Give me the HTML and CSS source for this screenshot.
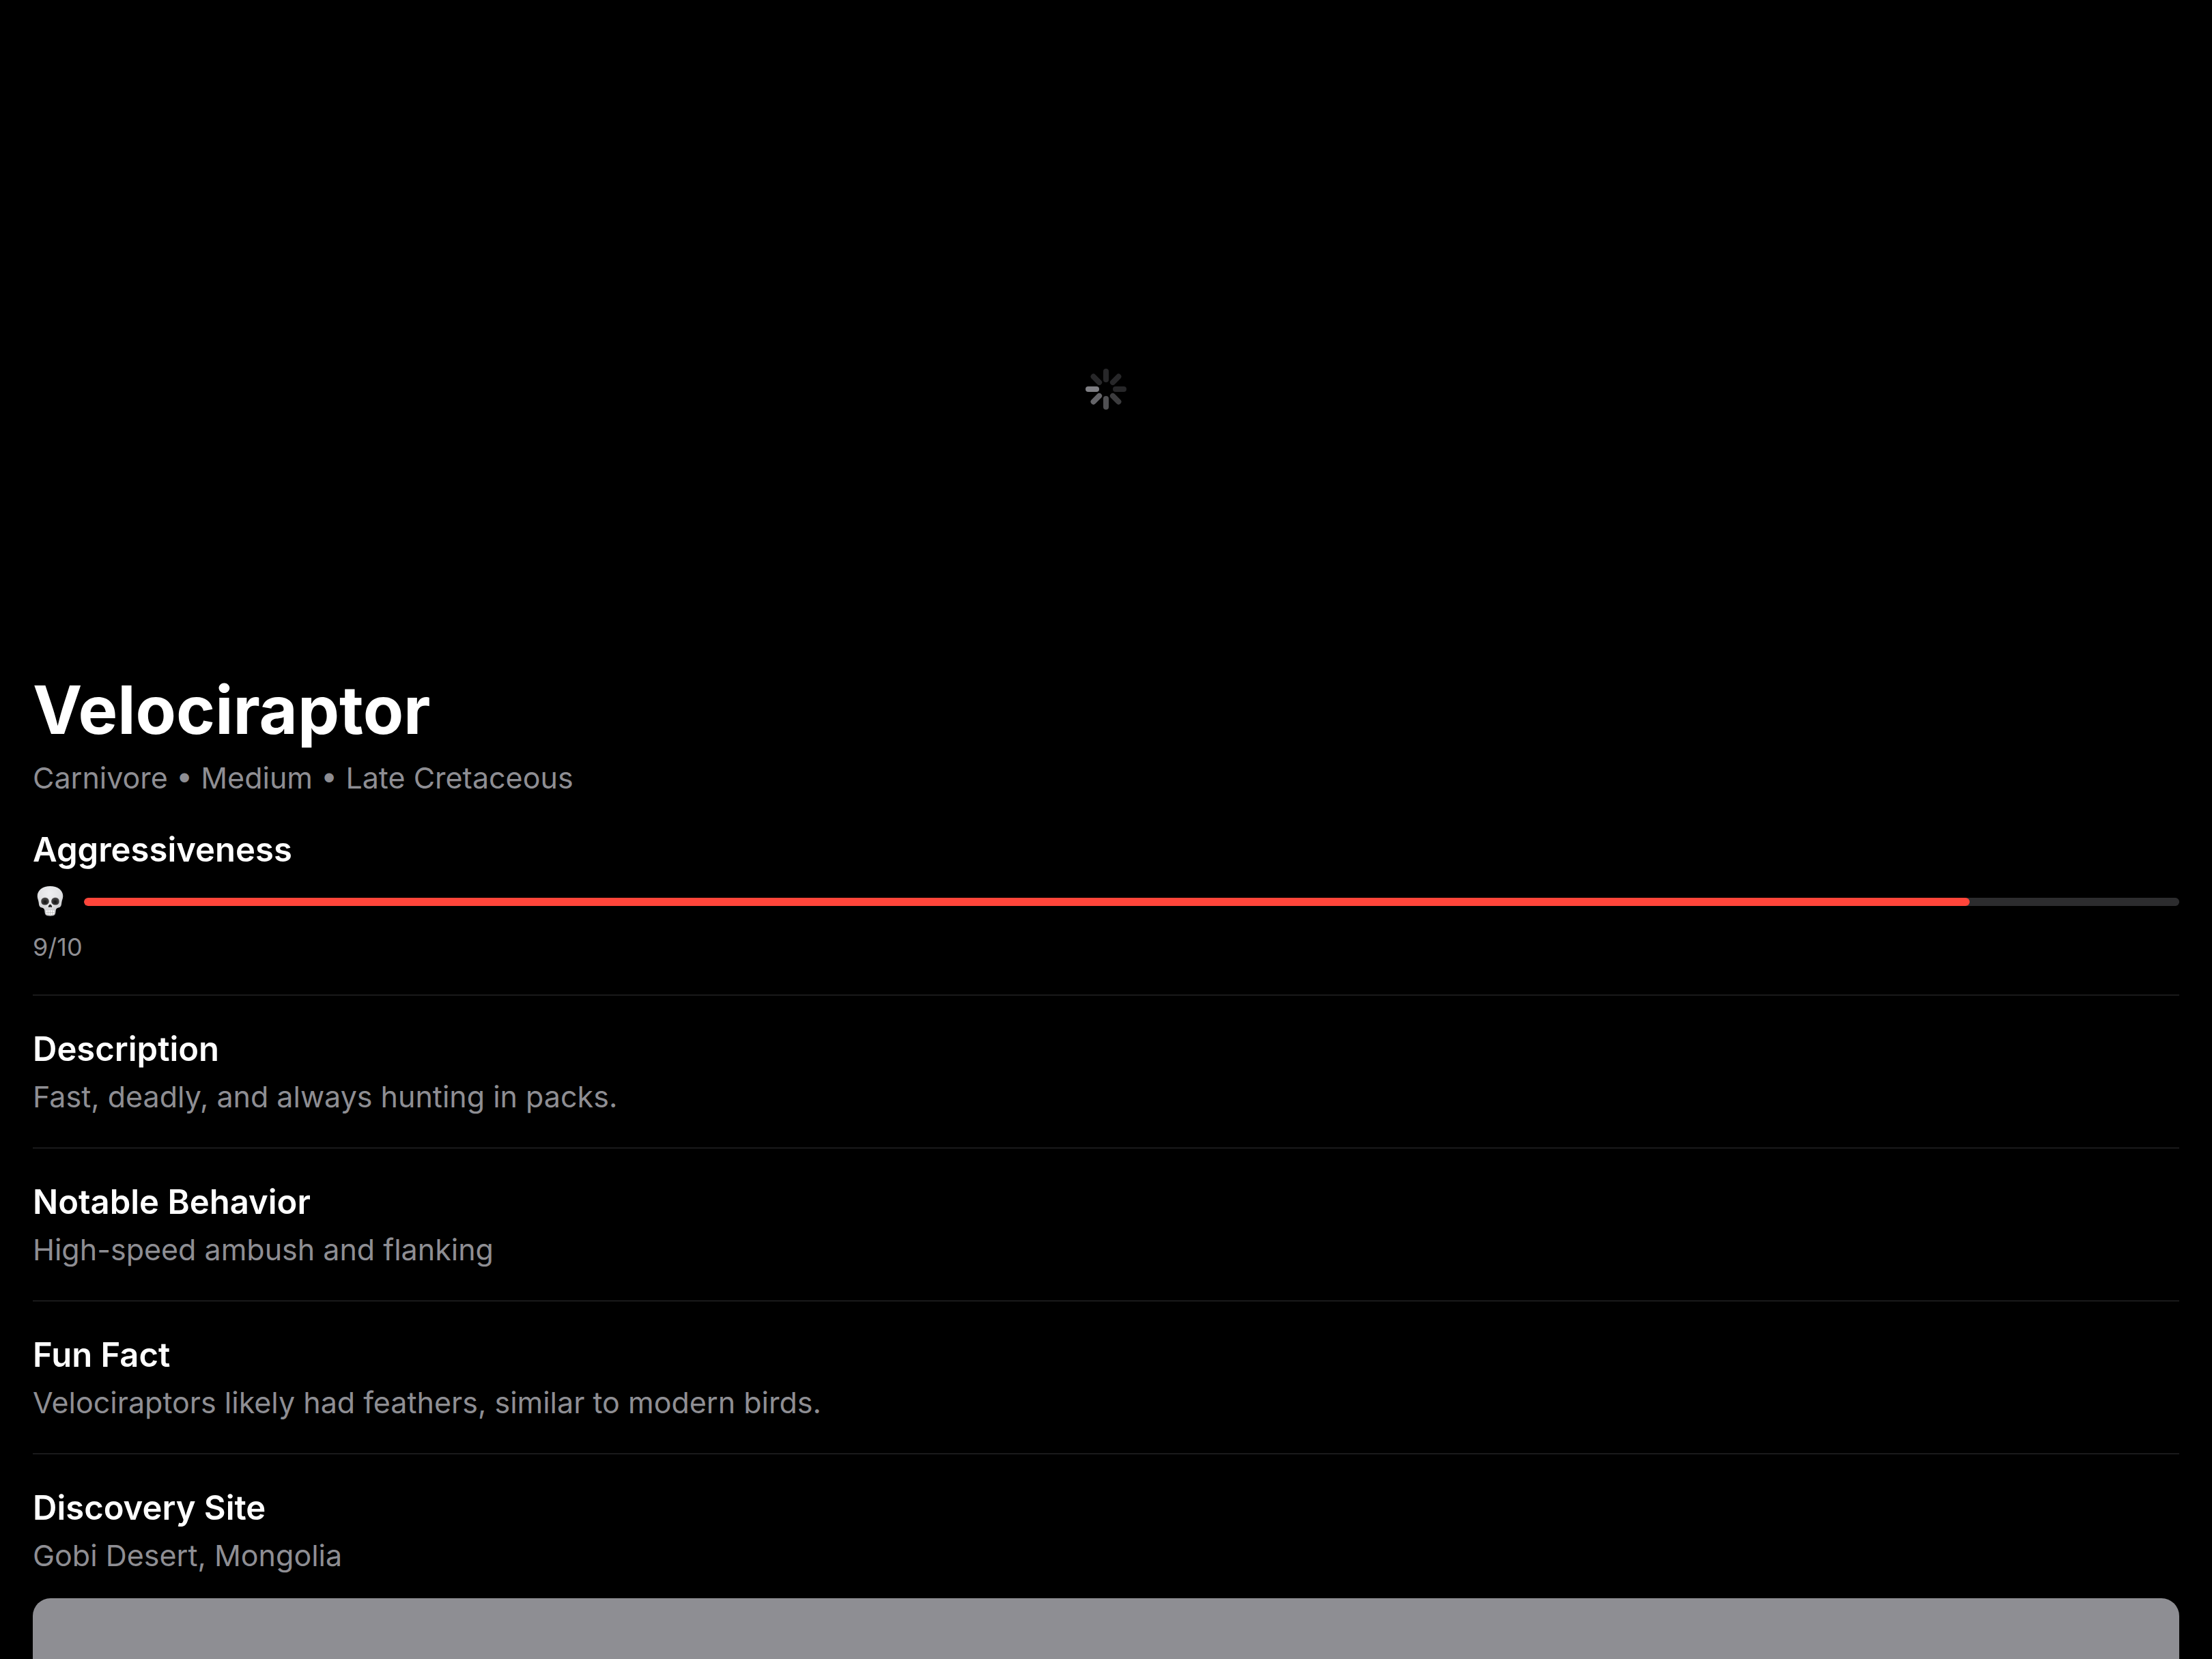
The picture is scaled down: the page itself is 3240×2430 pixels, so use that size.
FILE: index.html
```html
<!DOCTYPE html>
<html lang="en">
<head>
<meta charset="utf-8">
<meta name="viewport" content="width=device-width, initial-scale=1">
<title>Velociraptor</title>
<link rel="stylesheet" href="styles.css">
</head>
<body>
<main class="page">
  <div class="hero" role="status" aria-label="Loading image">
    <svg class="spinner" viewBox="-30 -30 60 60" aria-hidden="true">
      <rect x="-4" y="-30" width="8" height="20" rx="4" fill="#272729"/>
      <rect x="-4" y="-30" width="8" height="20" rx="4" fill="#272729" transform="rotate(45)"/>
      <rect x="-4" y="-30" width="8" height="20" rx="4" fill="#272729" transform="rotate(90)"/>
      <rect x="-4" y="-30" width="8" height="20" rx="4" fill="#3c3c3e" transform="rotate(135)"/>
      <rect x="-4" y="-30" width="8" height="20" rx="4" fill="#505053" transform="rotate(180)"/>
      <rect x="-4" y="-30" width="8" height="20" rx="4" fill="#656569" transform="rotate(225)"/>
      <rect x="-4" y="-30" width="8" height="20" rx="4" fill="#7f7f84" transform="rotate(270)"/>
      <rect x="-4" y="-30" width="8" height="20" rx="4" fill="#272729" transform="rotate(315)"/>
    </svg>
  </div>
  <article class="details">
    <header class="intro">
      <h1 class="title">Velociraptor</h1>
      <p class="body-text">Carnivore • Medium • Late Cretaceous</p>
    </header>
    <section class="meter">
      <h2 class="heading"><label for="aggressiveness">Aggressiveness</label></h2>
      <div class="meter-row">
        <svg class="skull" viewBox="0 0 51 54" aria-hidden="true">
          <defs>
            <radialGradient id="bone" cx="0.48" cy="0.25" r="0.8">
              <stop offset="0" stop-color="#eeeff1"/>
              <stop offset="0.5" stop-color="#e2e3e5"/>
              <stop offset="1" stop-color="#b4b5b8"/>
            </radialGradient>
            <radialGradient id="socket" cx="0.5" cy="0.6" r="0.6">
              <stop offset="0" stop-color="#101010"/>
              <stop offset="1" stop-color="#505050"/>
            </radialGradient>
          </defs>
          <path fill="url(#bone)" d="M25.500 4C14.500 4 6.700 10 6.700 18.500C6.700 22 8.300 24.500 8.700 28C9.100 31.500 9.500 34.500 12.500 35.300C15 36 16.800 36.500 17.200 39C17.500 41 17.400 43.500 18.500 45.600C20 48.500 31 48.500 32.500 45.600C33.600 43.500 33.500 41 33.800 39C34.200 36.500 36 36 38.500 35.300C41.500 34.500 41.900 31.500 42.300 28C42.700 24.500 44.300 22 44.300 18.500C44.300 10 36.500 4 25.500 4Z"/>
          <path fill="url(#socket)" d="M12.300 26.800C12 22.500 14.800 20.800 17.800 20.700C21.300 20.600 23.800 22.800 23.800 26.200C23.800 29.500 21.400 31.400 18 31.500C15 31.600 12.500 30.500 12.300 26.800Z"/>
          <path fill="url(#socket)" d="M38.700 26.800C39 22.500 36.200 20.800 33.200 20.700C29.700 20.600 27.200 22.800 27.200 26.200C27.200 29.500 29.600 31.400 33 31.500C36 31.600 38.500 30.500 38.700 26.800Z"/>
          <path fill="#222" d="M25.500 30.800C23.900 30.800 22.500 33.500 22.900 34.500C23.400 35.500 24.800 34.400 25.500 34.400C26.200 34.400 27.600 35.500 28.100 34.500C28.500 33.500 27.100 30.800 25.500 30.800Z"/>
          <path fill="#fafafa" d="M19.300 39.800C22 39 29 39 31.700 39.800L31.200 45C28 46.500 23 46.500 19.800 45Z"/>
          <path fill="none" stroke="#b0b0b0" stroke-width="0.700" d="M22.300 39.500V45.700M25.500 39.300V46M28.700 39.500V45.700M19.700 42.700H31.300"/>
        </svg>
        <progress class="bar" id="aggressiveness" value="9" max="10">9/10</progress>
      </div>
      <p class="caption">9/10</p>
    </section>
    <section class="fact">
      <h2 class="heading">Description</h2>
      <p class="body-text">Fast, deadly, and always hunting in packs.</p>
    </section>
    <section class="fact">
      <h2 class="heading">Notable Behavior</h2>
      <p class="body-text">High-speed ambush and flanking</p>
    </section>
    <section class="fact">
      <h2 class="heading">Fun Fact</h2>
      <p class="body-text">Velociraptors likely had feathers, similar to modern birds.</p>
    </section>
    <section class="fact">
      <h2 class="heading">Discovery Site</h2>
      <p class="body-text">Gobi Desert, Mongolia</p>
      <div class="map" role="img" aria-label="Map of the discovery site"></div>
    </section>
  </article>
</main>
</body>
</html>
```
FILE: styles.css
```css
* {
  box-sizing: border-box;
}

body {
  margin: 0;
  background: #000;
  color: #fff;
  font-family: Inter, "Liberation Sans", sans-serif;
}

h1,
h2,
p {
  margin: 0;
}

.page {
  height: 100vh;
  overflow: hidden;
}

.hero {
  display: flex;
  align-items: center;
  justify-content: center;
  height: 900px;
  padding-top: 240px;
}

.spinner {
  width: 60px;
  height: 60px;
}

.details {
  padding: 77px 48px 0;
}

.title {
  font-size: 97px;
  line-height: 126px;
  font-weight: 700;
}

.body-text {
  color: #8e8e93;
  font-size: 43px;
  line-height: 72px;
}

.intro {
  padding-bottom: 37px;
}

.heading {
  font-size: 49px;
  line-height: 66px;
  font-weight: 600;
}

.meter {
  padding-bottom: 47px;
}

.meter-row {
  display: flex;
  align-items: center;
  gap: 24px;
  height: 86px;
}

.skull {
  flex: none;
  width: 51px;
  height: 54px;
}

.bar {
  appearance: none;
  flex: 1;
  display: block;
  min-width: 0;
  height: 12px;
  border: 0;
  border-radius: 6px;
  background: #2c2c2e;
  overflow: hidden;
}

.bar::-webkit-progress-bar {
  border-radius: 6px;
  background: #2c2c2e;
}

.bar::-webkit-progress-value {
  border-radius: 6px;
  background: #ff453a;
}

.bar::-moz-progress-bar {
  border-radius: 6px;
  background: #ff453a;
}

.caption {
  color: #8e8e93;
  font-size: 36px;
  line-height: 46px;
}

.fact {
  padding: 46px 0 39px;
  border-top: 1px solid #303032;
}

.map {
  height: 600px;
  margin-top: 27px;
  border-radius: 26px;
  background: #8e8e93;
}
```
